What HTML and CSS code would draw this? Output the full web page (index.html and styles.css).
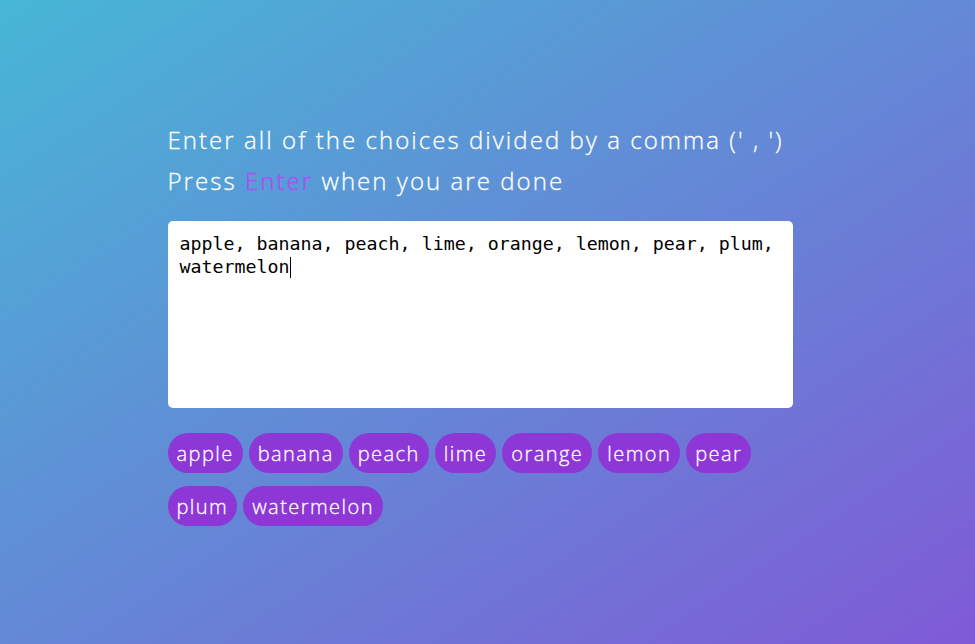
FILE: index.html
```html
<!DOCTYPE html>
<html lang="en">
<head>
<meta charset="UTF-8">
<title>Random Choice Picker</title>
<link rel="stylesheet" href="styles.css">
</head>
<body>
<div class="container">
  <h3 class="prompt">Enter all of the choices divided by a comma (' , ')<br>Press <span class="accent">Enter</span> when you are done</h3>
  <div class="textarea">apple, banana, peach, lime, orange, lemon, pear, plum, watermelon<span class="caret"></span></div>
  <div class="tags">
    <span class="tag">apple</span>
    <span class="tag">banana</span>
    <span class="tag">peach</span>
    <span class="tag">lime</span>
    <span class="tag">orange</span>
    <span class="tag">lemon</span>
    <span class="tag">pear</span>
    <span class="tag">plum</span>
    <span class="tag">watermelon</span>
  </div>
</div>
</body>
</html>
```
FILE: styles.css
```css
* { box-sizing: border-box; }
html, body { height: 100%; }
body {
  margin: 0;
  background: linear-gradient(to bottom right, #47b7d6, #805ad6);
  font-family: "Open Sans", "Noto Sans", sans-serif;
  color: #fff;
  overflow: hidden;
}
.container {
  width: 640px;
  margin: 0 auto;
  padding-top: 119px;
}
.prompt {
  margin: 0 0 20px;
  font-weight: 300;
  font-size: 24px;
  letter-spacing: 2.05px;
  line-height: 41px;
  -webkit-text-stroke: 0.3px #fff;
}
.accent { color: #ab4ff5; -webkit-text-stroke: 0.45px #ab4ff5; }
.textarea {
  width: 625px;
  height: 187px;
  background: #fff;
  border-radius: 5px;
  padding: 11px 12px;
  color: #000;
  font-family: "DejaVu Sans Mono", monospace;
  font-weight: 400;
  font-size: 18.3px;
  line-height: 23px;
  margin-bottom: 25px;
}
.caret {
  display: inline-block;
  width: 1px;
  height: 21px;
  background: #000;
  vertical-align: -5px;
}
.tags {
  display: flex;
  flex-wrap: wrap;
  gap: 13px 6px;
  width: 625px;
}
.tag {
  background: #8e37d7;
  border-radius: 50px;
  height: 40px;
  padding: 0 9px;
  display: inline-flex;
  align-items: center;
  font-size: 20px;
  font-weight: 300;
  letter-spacing: 1.45px;
  -webkit-text-stroke: 0.3px #fff;
}
```
